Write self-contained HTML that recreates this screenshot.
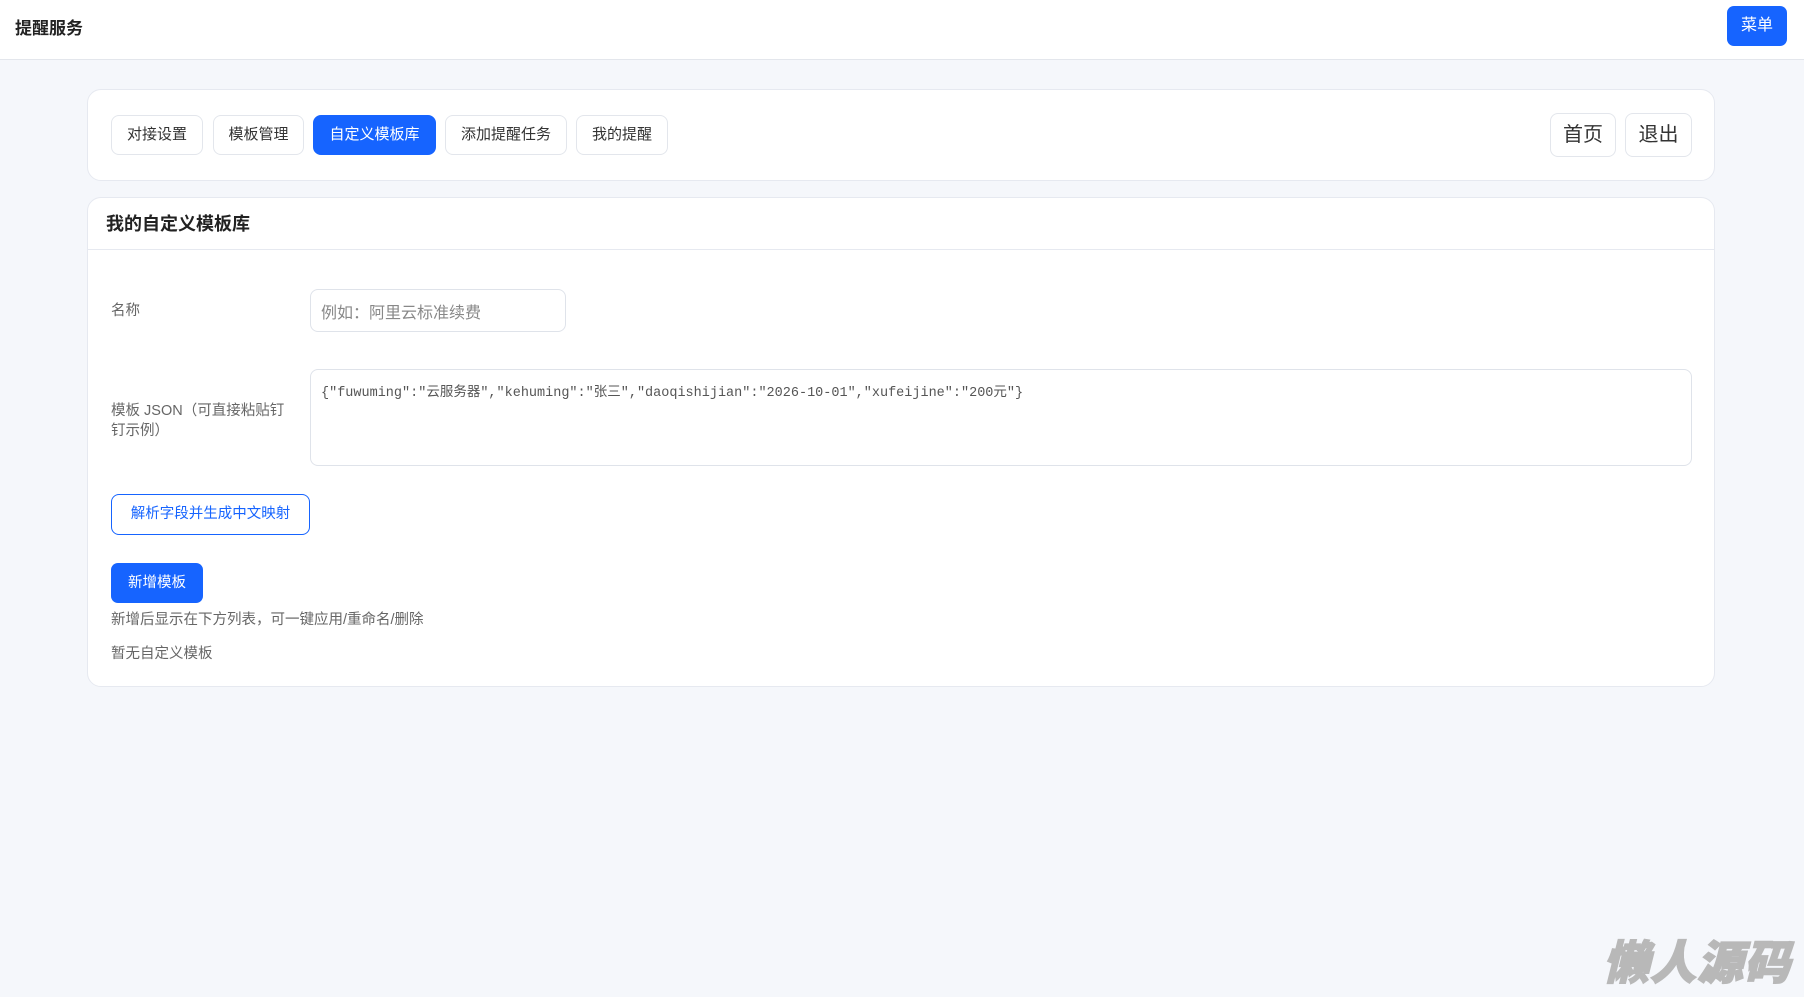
<!DOCTYPE html>
<html><head><meta charset="utf-8"><style>
*{box-sizing:border-box;margin:0;padding:0}
body{width:1804px;height:997px;overflow:hidden;background:#f5f7fb;font-family:"Liberation Sans","Noto Sans CJK SC",sans-serif;color:#222;position:relative}
.top{position:absolute;left:0;top:0;width:1804px;height:60px;background:#fff;border-bottom:1px solid #e3e6ec}
.top .t{position:absolute;left:15px;top:14px;font-size:17px;font-weight:bold;color:#222}
.menu{position:absolute;left:1727px;top:6px;width:60px;height:40px;background:#1664ff;color:#fff;border-radius:7px;font-size:16px;text-align:center;line-height:40px}
.card{position:absolute;left:87px;width:1628px;background:#fff;border:1px solid #e6e9f0;border-radius:14px}
.tab{position:absolute;top:25px;height:40px;border:1px solid #e3e6ec;border-radius:8px;font-size:15px;line-height:38px;text-align:center;color:#333;background:#fff}
.tab.on{background:#1664ff;color:#fff;border-color:#1664ff}
.rb{position:absolute;top:23px;height:44px;border:1px solid #e3e6ec;border-radius:8px;font-size:20px;line-height:42px;text-align:center;color:#333}
.lbl{position:absolute;left:23px;font-size:14.5px;color:#666;line-height:20px}
.inp{position:absolute;border:1px solid #dfe3ea;border-radius:8px;background:#fff}
</style></head><body>
<div class="top"><div class="t">提醒服务</div><div class="menu">菜单</div></div>
<div class="card" style="top:89px;height:92px">
<div class="tab" style="left:23px;width:92px">对接设置</div>
<div class="tab" style="left:125px;width:91px">模板管理</div>
<div class="tab on" style="left:225px;width:123px">自定义模板库</div>
<div class="tab" style="left:357px;width:122px">添加提醒任务</div>
<div class="tab" style="left:488px;width:92px">我的提醒</div>
<div class="rb" style="left:1462px;width:66px">首页</div>
<div class="rb" style="left:1537px;width:67px">退出</div>
</div>
<div class="card" style="top:197px;height:490px">
<div style="position:absolute;left:18px;top:12px;font-size:18px;font-weight:bold;color:#222">我的自定义模板库</div>
<div style="position:absolute;left:0;top:51px;width:100%;border-top:1px solid #e6e9f0"></div>
<div class="lbl" style="top:103px">名称</div>
<div class="inp" style="left:222px;top:91px;width:256px;height:43px;font-size:16px;color:#888;padding:9px 10px">例如：阿里云标准续费</div>
<div class="lbl" style="top:203px;width:180px">模板 JSON（可直接粘贴钉钉示例）</div>
<div class="inp" style="left:222px;top:171px;width:1382px;height:97px;font-family:'Liberation Mono','Noto Sans CJK SC',monospace;font-size:13.5px;color:#555;padding:10px 10px">{"fuwuming":"云服务器","kehuming":"张三","daoqishijian":"2026-10-01","xufeijine":"200元"}</div>
<div style="position:absolute;left:23px;top:296px;width:199px;height:41px;border:1px solid #1664ff;border-radius:8px;color:#1664ff;font-size:14.5px;text-align:center;line-height:39px">解析字段并生成中文映射</div>
<div style="position:absolute;left:23px;top:365px;width:92px;height:40px;background:#1664ff;border-radius:7px;color:#fff;font-size:14.5px;text-align:center;line-height:40px">新增模板</div>
<div class="lbl" style="top:412px">新增后显示在下方列表，可一键应用/重命名/删除</div>
<div class="lbl" style="top:446px">暂无自定义模板</div>
</div>
<div style="position:absolute;left:1603px;top:930px;font-size:46px;font-weight:900;font-style:italic;color:#b8b8b8;letter-spacing:1px;font-family:'Noto Sans CJK SC',sans-serif;-webkit-text-stroke:1.5px #b8b8b8;line-height:60px">懒人源码</div>
</body></html>
